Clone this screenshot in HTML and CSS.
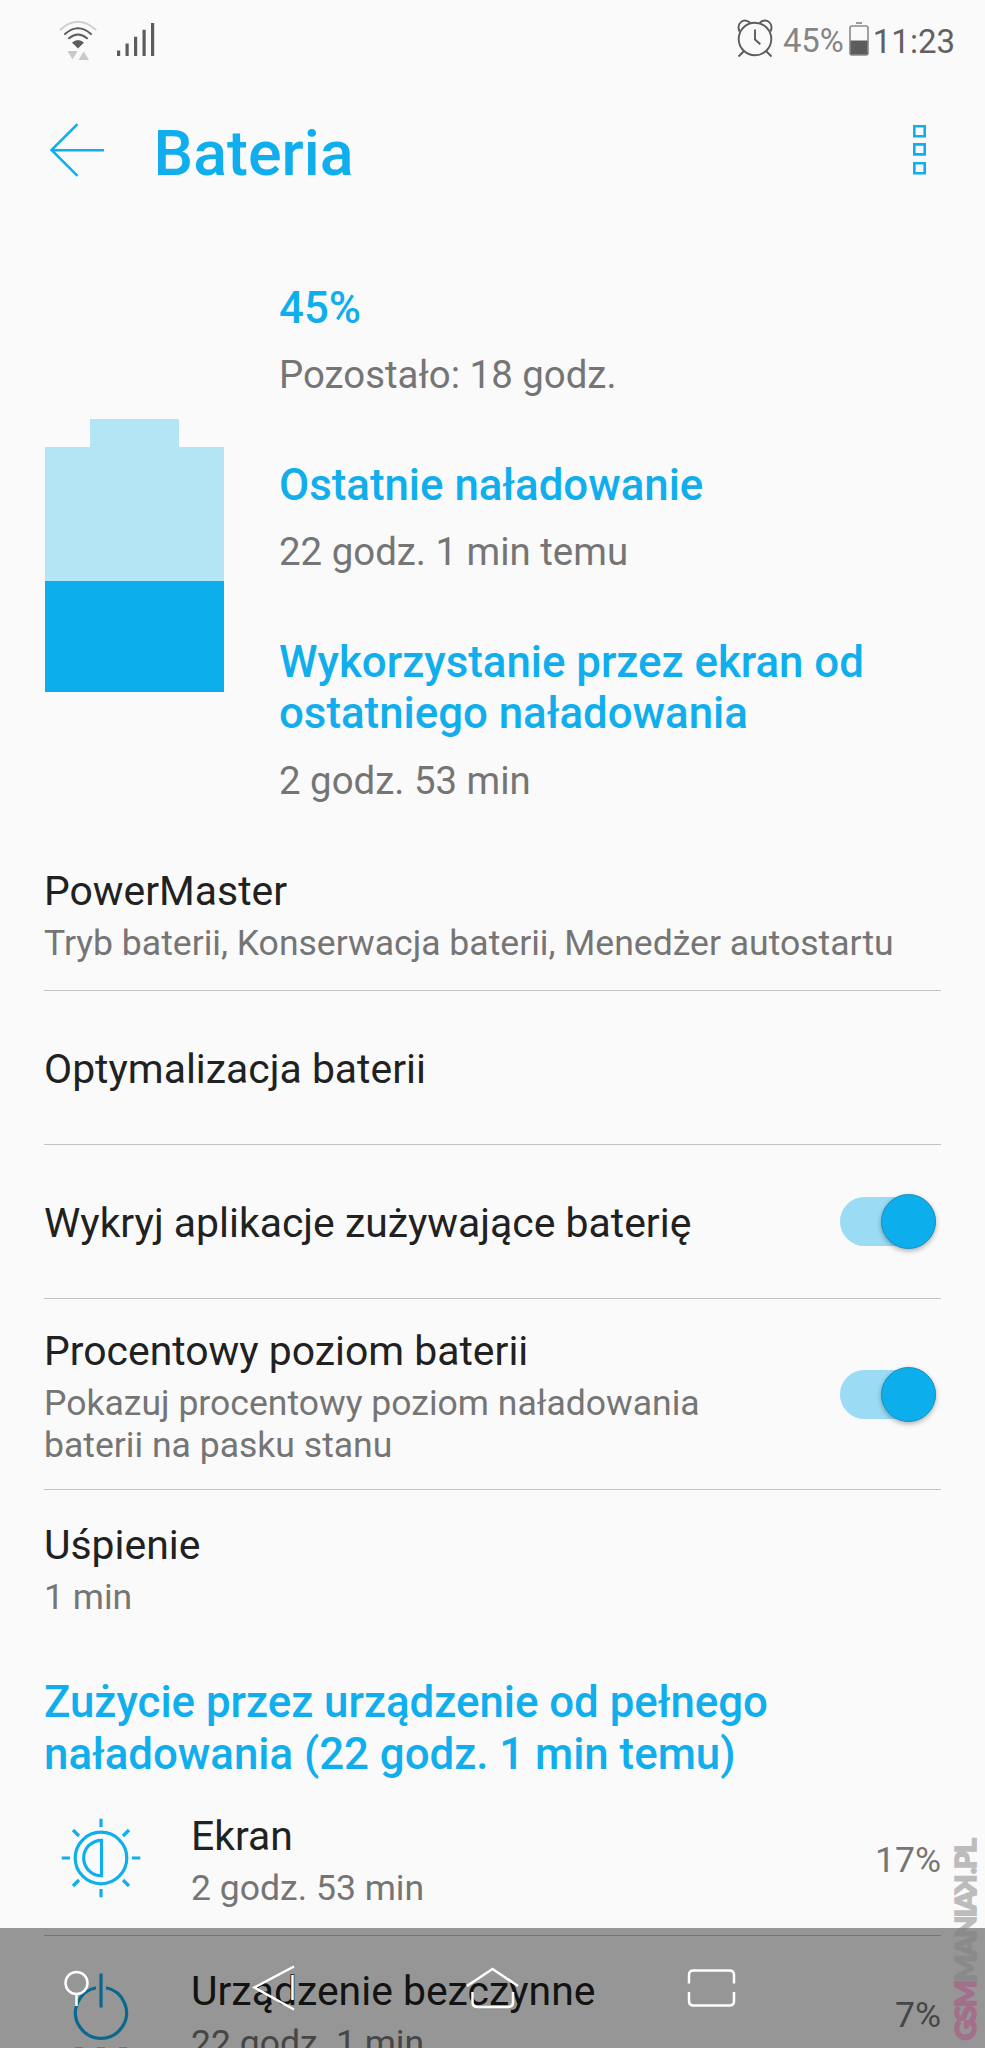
FILE: index.html
```html
<!DOCTYPE html>
<html lang="pl">
<head>
<meta charset="utf-8">
<title>Bateria</title>
<link rel="stylesheet" href="styles.css">
</head>
<body>
<div class="screen">
  <div class="status">
    <svg class="wifi" width="38" height="40" viewBox="0 0 38 40" fill="none" stroke-linecap="round">
      <path d="M1.5 9.5Q19-6 36.500 9.500" stroke="#cfcfcf" stroke-width="2"/>
      <path d="M6 14Q19 2.500 32 14M10 18.300Q19 10.700 28 18.300" stroke="#5c5c5c" stroke-width="2"/>
      <path d="M13 22.500Q19 17.500 25 22.500L19 28.500Z" fill="#5c5c5c"/>
      <path d="M8.500 31H18.500L13.500 39.500ZM19.500 40H30L24.700 31.500Z" fill="#c9c9c9"/>
    </svg>
    <svg class="signal" width="38" height="33" viewBox="0 0 38 33" fill="#5c5c5c">
      <path d="M0 27.500h3.200V33H0zM8.500 20.500h3.200V33H8.500zM17 13.700h3.200V33H17zM25.500 6.700h3.200V33h-3.200zM34 0h3.200v33H34z"/>
    </svg>
    <svg class="alarm" width="36" height="40" viewBox="0 0 36 40" fill="none" stroke="#5c5c5c" stroke-width="1.900">
      <circle cx="18" cy="20" r="16.300"/>
      <path d="M2.600 12.500C-1 5 6 -2 13.300 3.800M33.400 12.500C37 5 30 -2 22.700 3.800M7 32L1.500 37.500M29 32L34.500 37.500M18 10.500V20.500L23.300 25.300"/>
    </svg>
    <span class="percent">45%</span>
    <svg class="cell" width="20" height="34" viewBox="0 0 20 34">
      <path d="M7 1h6" stroke="#9a9a9a" stroke-width="2"/>
      <rect x="1" y="4" width="18" height="29" rx="2" fill="none" stroke="#8a8a8a" stroke-width="1.600"/>
      <rect x="1.500" y="18.500" width="17" height="14" fill="#5c5c5c"/>
    </svg>
    <span class="clock">11:23</span>
  </div>
  <header class="bar">
    <svg width="56" height="56" viewBox="0 0 56 56" fill="none" stroke="#10aeec" stroke-width="2.500">
      <path d="M28.500 2.200L2.500 28L28.500 53.800M2.500 28.300H55"/>
    </svg>
    <h1>Bateria</h1>
    <svg class="more" width="13" height="50" viewBox="0 0 13 50" fill="none" stroke="#10aeec" stroke-width="2.600">
      <path d="M1.300 1.300h10.400v10H1.300zM1.300 19.400h10.400v10H1.300zM1.300 38.300h10.400v10H1.300z"/>
    </svg>
  </header>
  <section class="summary">
    <div class="battery"><div class="tip"></div><div class="body"><div class="level" style="height:45%"></div></div></div>
    <dl>
      <dt>45%</dt><dd>Pozostało: 18 godz.</dd>
      <dt>Ostatnie naładowanie</dt><dd>22 godz. 1 min temu</dd>
      <dt>Wykorzystanie przez ekran od<br>ostatniego naładowania</dt><dd>2 godz. 53 min</dd>
    </dl>
  </section>
  <div class="row first"><div class="text"><div class="name">PowerMaster</div><div class="note">Tryb baterii, Konserwacja baterii, Menedżer autostartu</div></div></div>
  <div class="row single"><div class="name">Optymalizacja baterii</div></div>
  <div class="row single"><div class="name">Wykryj aplikacje zużywające baterię</div><div class="switch"><i></i></div></div>
  <div class="row double"><div class="text"><div class="name">Procentowy poziom baterii</div><div class="note">Pokazuj procentowy poziom naładowania<br>baterii na pasku stanu</div></div><div class="switch"><i></i></div></div>
  <div class="row last"><div class="text"><div class="name">Uśpienie</div><div class="note">1 min</div></div></div>
  <h2>Zużycie przez urządzenie od pełnego<br>naładowania (22 godz. 1 min temu)</h2>
  <div class="row usage">
    <svg class="icon" width="80" height="80" viewBox="-40 -40 80 80" fill="none" stroke="#10aeec" stroke-width="3.200">
      <circle r="25.800"/>
      <path d="M0-39.300V-31M0 31V39.300M-39.300 0H-31M31 0H39.300M-28-28L-22-22M28-28L22-22M-28 28L-22 22M28 28L22 22M.500-17.700V17.700A17.800 17.700 0 0 1 .500-17.700Z"/>
    </svg>
    <div class="text"><div class="name">Ekran</div><div class="note">2 godz. 53 min</div></div>
    <div class="share">17%</div>
  </div>
  <div class="row usage">
    <svg class="icon" width="80" height="80" viewBox="-40 -40 80 80" fill="none" stroke="#10aeec" stroke-width="3.200">
      <path d="M0-39.500V-5.500M-5-25.200A25.500 25.500 0 1 0 5-25.200M-26 36h8M-4 36h8M18 36h8"/>
    </svg>
    <div class="text"><div class="name">Urządzenie bezczynne</div><div class="note">22 godz. 1 min</div></div>
    <div class="share">7%</div>
  </div>
  <nav class="nav">
    <svg width="985" height="120" viewBox="0 0 985 120" fill="none" stroke="#fff" stroke-width="2.500">
      <circle cx="76.500" cy="55" r="11"/>
      <path d="M76.500 66V78M294 38.500L254.500 59.500L294 81.500M292.500 47V72"/>
      <path d="M467 58L492.500 41L518 58M472.500 64V74Q472.500 79 477.500 79H508Q513 79 513 74V64"/>
      <path d="M689 55.500V47Q689 42.500 693.500 42.500H729.500Q734 42.500 734 47V55.500M689 64V73Q689 77.500 693.500 77.500H729.500Q734 77.500 734 73V64"/>
    </svg>
  </nav>
  <div class="brand"><b>GSM</b>MANIA<span class="flip">K</span>.PL</div>
</div>
</body>
</html>
```
FILE: styles.css
```css
* { box-sizing: border-box; }
body { margin: 0; background: #fafafa; font-family: Roboto, sans-serif; color: #212121; }
.screen { position: relative; width: 985px; height: 2048px; overflow: hidden; }
.status { display: flex; align-items: flex-start; height: 80px; padding: 19px 30px 0 59px; color: #616161; }
.wifi { margin-top: 1px; }
.signal { margin: 4px 0 0 20px; }
.alarm { margin-left: auto; }
.percent, .clock { font-size: 33px; line-height: 45px; }
.percent { margin-left: 10px; color: #858585; font-size: 32.800px; }
.cell { margin: 3px 4px 0 5px; }
.bar { display: flex; align-items: center; height: 140px; padding: 0 59px 0 49px; }
h1 { margin: 8px 0 0 48.500px; font-size: 62.800px; line-height: 72px; font-weight: 500; color: #10aeec; }
.more { margin-left: auto; }
.summary { display: flex; align-items: flex-start; height: 616px; padding: 62.500px 0 0 45px; }
.battery { width: 179px; margin: 136px 55px 0 0; }
.tip { width: 89px; height: 28px; margin: 0 auto; background: #b3e5f5; }
.body { display: flex; align-items: flex-end; height: 245px; background: #b3e5f5; }
.level { width: 100%; background: #0caeec; }
dl, dd { margin: 0; }
dt { font-size: 43.800px; line-height: 51.700px; font-weight: 500; color: #10aeec; }
dd { margin: 18px 0 61.300px; font-size: 38.400px; line-height: 46px; color: #757575; }
.row { display: flex; align-items: center; height: 154px; margin: 0 44px; border-bottom: 1px solid #c4c4c4; }
.first, .usage { height: 155px; padding-top: 4px; }
.double { height: 191px; }
.double .text { margin-top: 4px; }
.last { border: 0; padding-top: 4px; }
.single .name { padding-top: 3px; }
.name { font-size: 40.900px; line-height: 50px; white-space: nowrap; }
.note { margin-top: 6px; font-size: 35.550px; line-height: 42px; color: #757575; white-space: nowrap; }
.switch { flex: none; width: 96px; height: 49px; margin: 0 5px 0 auto; border-radius: 25px; background: #9bdcf4; display: flex; align-items: center; justify-content: flex-end; }
.switch i { flex: none; width: 55px; height: 55px; border-radius: 50%; background: #0caeec; border: 1px solid #178fc4; box-shadow: 0 2px 5px rgba(0, 0, 0, .3); }
h2 { height: 104px; margin: 33px 44px 0; font-size: 43.800px; line-height: 51.700px; font-weight: 500; color: #10aeec; }
.icon { margin: -5px 50px 0 17px; }
.share { margin-left: auto; font-size: 35.600px; line-height: 42px; color: #757575; }
.nav { position: absolute; left: 0; top: 1928px; width: 985px; height: 120px; background: rgba(0, 0, 0, .4); }
.nav svg { display: block; }
.brand { position: absolute; left: 950px; bottom: 7px; width: 30px; writing-mode: vertical-rl; transform: rotate(180deg); font: 900 29px/30px Lato, sans-serif; letter-spacing: -2px; color: #808080; -webkit-text-stroke: 1.500px currentColor; opacity: .5; white-space: nowrap; }
.brand b { color: #b04a80; font-weight: 900; }
.flip { display: inline-block; transform: scaleY(-1); }
```
